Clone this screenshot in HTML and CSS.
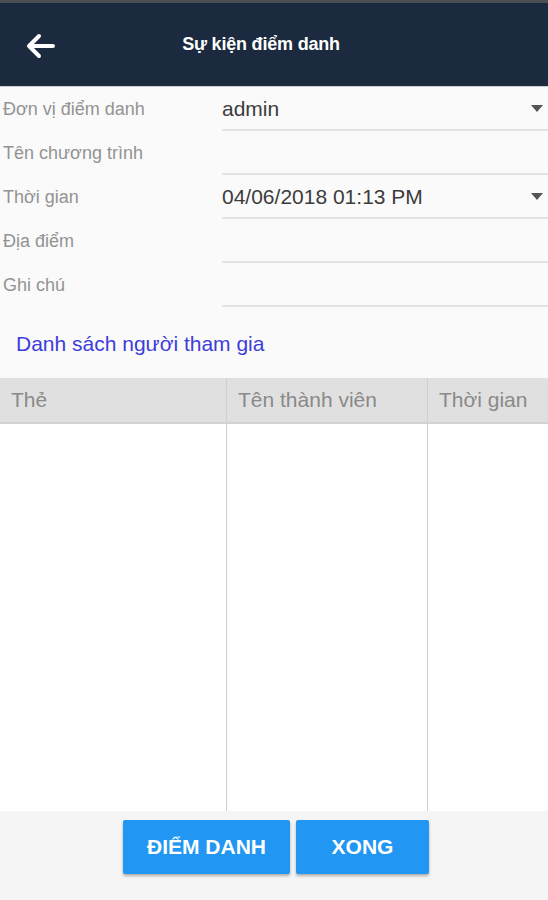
FILE: index.html
```html
<!DOCTYPE html>
<html lang="vi">
<head>
  <meta charset="UTF-8">
  <title>Sự kiện điểm danh</title>
  <link rel="stylesheet" href="styles.css">
</head>
<body>
  <div class="app">
    <header class="topbar">
      <button class="back" type="button" aria-label="Quay lại">
        <svg width="30" height="26" viewBox="0 0 30 26">
          <path d="M28 13H4M14 3L4 13l10 10" fill="none" stroke="#fff" stroke-width="4" stroke-linecap="round" stroke-linejoin="round"/>
        </svg>
      </button>
      <h1>Sự kiện điểm danh</h1>
    </header>

    <div class="form">
      <div class="row">
        <span class="label">Đơn vị điểm danh</span>
        <div class="field select">admin</div>
      </div>
      <div class="row">
        <span class="label">Tên chương trình</span>
        <div class="field"></div>
      </div>
      <div class="row">
        <span class="label">Thời gian</span>
        <div class="field select">04/06/2018 01:13 PM</div>
      </div>
      <div class="row">
        <span class="label">Địa điểm</span>
        <div class="field"></div>
      </div>
      <div class="row">
        <span class="label">Ghi chú</span>
        <div class="field"></div>
      </div>
    </div>

    <div class="section-title">Danh sách người tham gia</div>

    <div class="table">
      <div class="thead">
        <div class="col c1">Thẻ</div>
        <div class="col c2">Tên thành viên</div>
        <div class="col c3">Thời gian</div>
      </div>
      <div class="tbody">
        <div class="col c1"></div>
        <div class="col c2"></div>
        <div class="col c3"></div>
      </div>
    </div>

    <footer class="actions">
      <button type="button" class="btn btn-wide">ĐIỂM DANH</button>
      <button type="button" class="btn">XONG</button>
    </footer>
  </div>
</body>
</html>
```

FILE: styles.css
```css
* {
  box-sizing: border-box;
}

body {
  margin: 0;
  font-family: 'Liberation Sans', Arial, sans-serif;
  background: #fafafa;
}

.app {
  height: 900px;
  display: flex;
  flex-direction: column;
}

.topbar {
  height: 87px;
  border-top: 3px solid #4b4f55;
  border-bottom: 1px solid #c9ccd0;
  background: #1b2a3e;
  display: flex;
  align-items: center;
  position: relative;
}

.back {
  background: none;
  border: none;
  padding: 0;
  margin-left: 25px;
  margin-top: 2px;
  display: flex;
  cursor: pointer;
}

.topbar h1 {
  position: absolute;
  left: 0;
  right: 26px;
  margin: 0;
  text-align: center;
  color: #fff;
  font-size: 18px;
  font-weight: bold;
  letter-spacing: -0.2px;
  pointer-events: none;
}

.row {
  display: flex;
  height: 44px;
}

.label {
  width: 222px;
  padding-left: 3px;
  display: flex;
  align-items: center;
  color: #939393;
  font-size: 18px;
}

.field {
  flex: 1;
  border-bottom: 2px solid #e2e2e2;
  display: flex;
  align-items: center;
  color: #3c3c3c;
  font-size: 21px;
  padding-top: 2px;
  position: relative;
}

.select::after {
  content: "";
  position: absolute;
  right: 5px;
  top: 18px;
  border-left: 6px solid transparent;
  border-right: 6px solid transparent;
  border-top: 7px solid #555;
}

.section-title {
  height: 71px;
  padding-left: 16px;
  display: flex;
  align-items: center;
  color: #3d3ddb;
  font-size: 21px;
  padding-top: 2px;
}

.table {
  flex: 1;
  display: flex;
  flex-direction: column;
}

.thead,
.tbody {
  display: flex;
}

.thead {
  height: 46px;
  background: #e0e0e0;
  border-bottom: 2px solid #d2d2d2;
}

.tbody {
  flex: 1;
  background: #fff;
}

.col {
  border-right: 1px solid #cfcfcf;
}

.thead .col {
  display: flex;
  align-items: center;
  padding-left: 11px;
  color: #8a8a8a;
  font-size: 21px;
}

.c1 {
  width: 227px;
}

.c2 {
  width: 201px;
}

.c3 {
  flex: 1;
  border-right: none;
}

.actions {
  height: 89px;
  background: #f5f5f5;
  display: flex;
  justify-content: center;
  align-items: flex-start;
  gap: 6px;
  padding-top: 9px;
  padding-left: 4px;
}

.btn {
  height: 54px;
  width: 133px;
  border: none;
  border-radius: 2px;
  background: #2196f3;
  color: #fff;
  font-family: 'Liberation Sans', Arial, sans-serif;
  font-size: 21px;
  font-weight: bold;
  box-shadow: 0 2px 3px rgba(0, 0, 0, 0.3);
  cursor: pointer;
}

.btn-wide {
  width: 167px;
}
```
